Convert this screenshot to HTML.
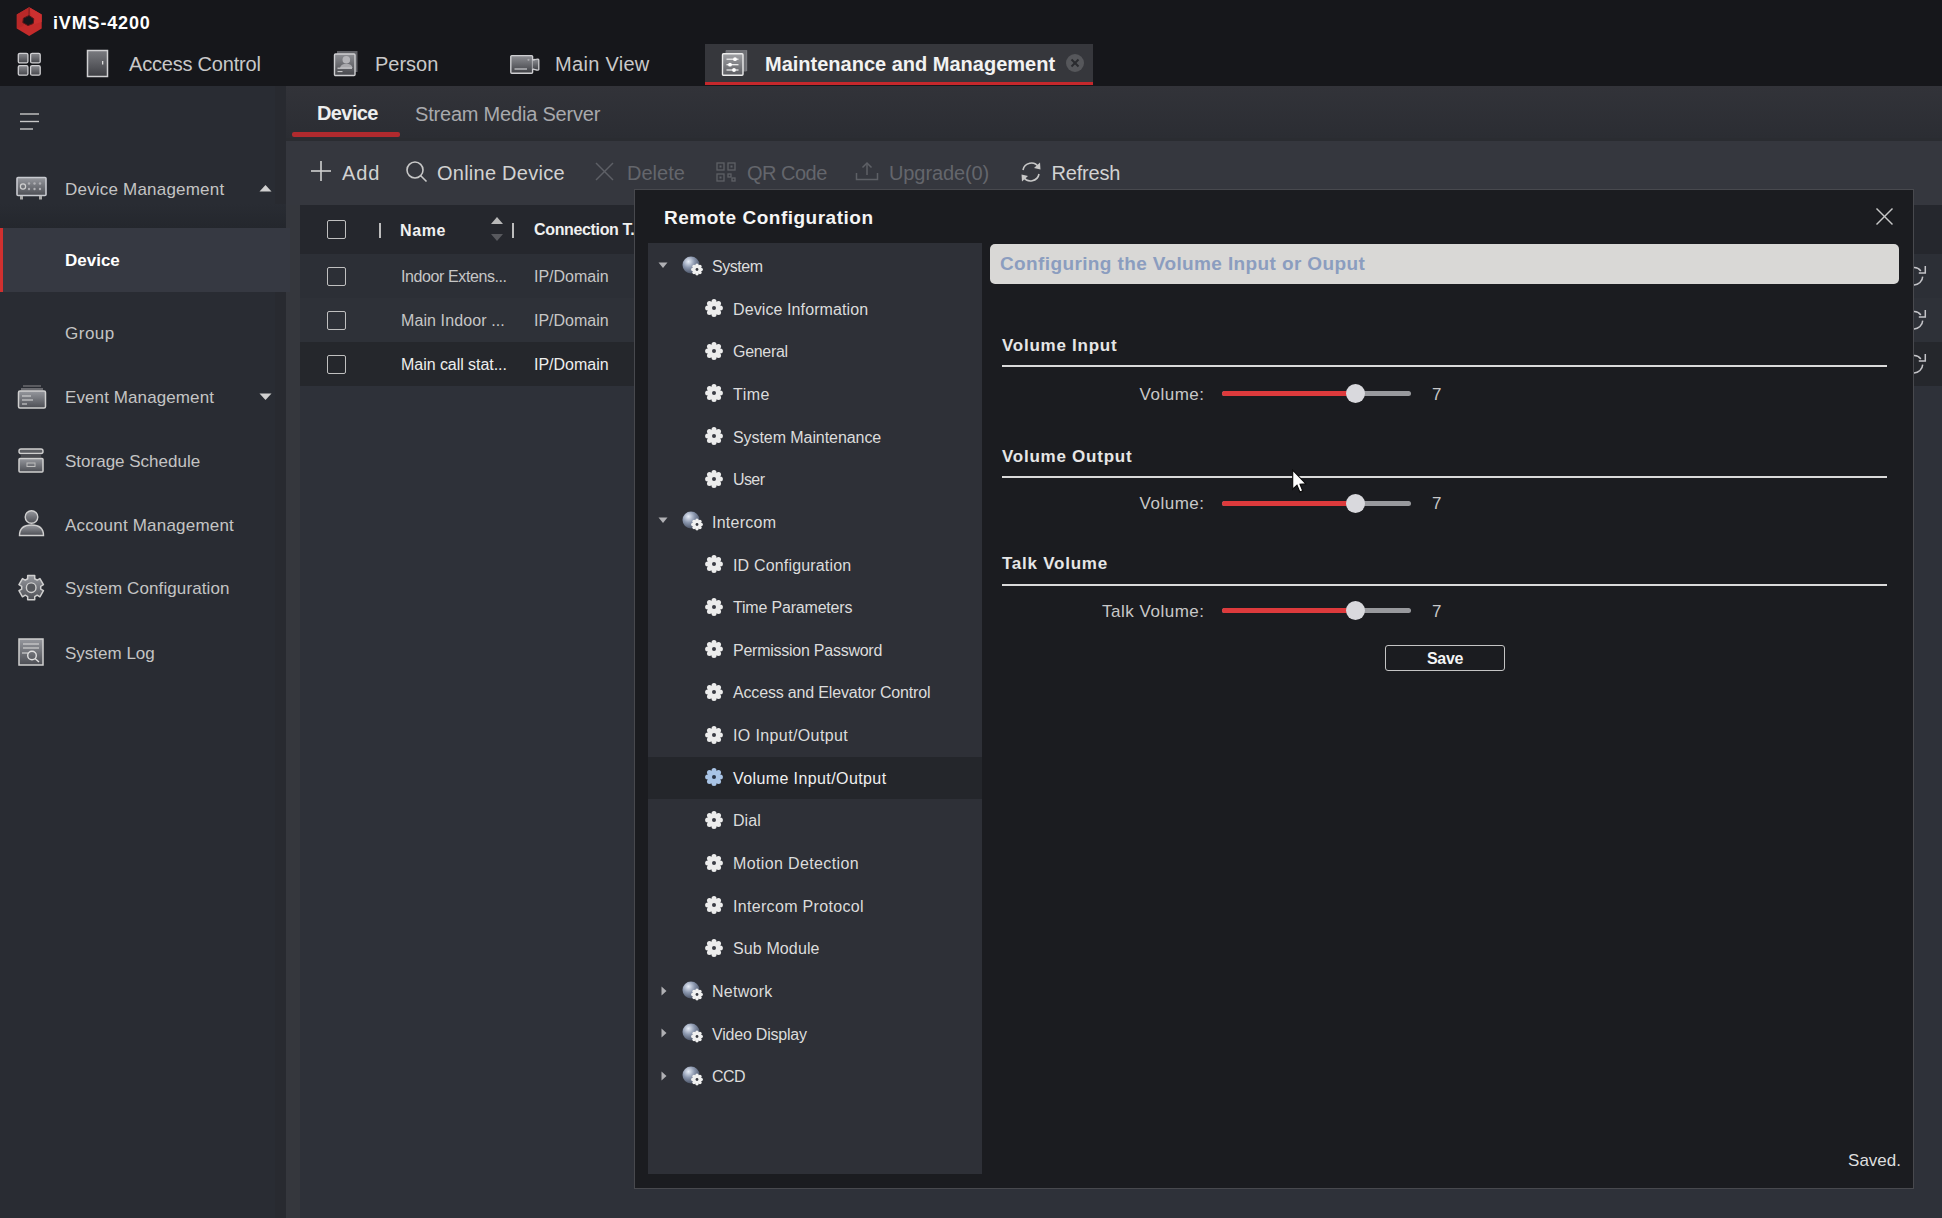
<!DOCTYPE html>
<html><head><meta charset="utf-8"><title>iVMS-4200</title>
<style>
html,body{margin:0;padding:0;}
body{width:1942px;height:1218px;position:relative;overflow:hidden;background:#2e3139;font-family:"Liberation Sans", sans-serif;}
</style></head><body>
<div style="position:absolute;left:0px;top:0px;width:1942px;height:86px;background:#16171b;"></div>
<div style="position:absolute;left:0px;top:86px;width:1942px;height:1132px;background:#2e3139;"></div>
<div style="position:absolute;left:0px;top:86px;width:275px;height:1132px;background:#292c33;"></div>
<div style="position:absolute;left:275px;top:86px;width:11px;height:1132px;background:#282a30;"></div>
<div style="position:absolute;left:286px;top:86px;width:14px;height:1132px;background:#35373d;"></div>
<div style="position:absolute;left:286px;top:86px;width:1656px;height:52px;background:linear-gradient(#323339,#2b2d33);"></div>
<div style="position:absolute;left:286px;top:138px;width:1656px;height:3px;background:#2a2c31;"></div>
<div style="position:absolute;left:286px;top:141px;width:1656px;height:64px;background:#35373e;"></div>
<div style="position:absolute;left:300px;top:205px;width:1642px;height:49px;background:#25272d;"></div>
<div style="position:absolute;left:300px;top:254px;width:1642px;height:44px;background:#2c2f36;"></div>
<div style="position:absolute;left:300px;top:298px;width:1642px;height:44px;background:#2e3138;"></div>
<div style="position:absolute;left:300px;top:342px;width:1642px;height:44px;background:#25272c;"></div>
<svg style="position:absolute;left:0px;top:0px;" width="50" height="45" viewBox="0 0 50 45">
<polygon points="29.2,7.3 41.7,14.5 41.7,28.6 29.2,36 16.8,28.6 16.8,14.5" fill="#c42b2b"/>
<polygon points="29.2,7.3 41.7,14.5 41.7,22 33.5,24.5" fill="#cc3030"/>
<polygon points="16.8,14.5 29.2,7.3 29,16 23,26 16.8,28.6" fill="#b82828"/>
<polygon points="29,15.5 33.8,18.8 33.2,23.5 28,25.6 22.8,22.6 23.4,18.2" fill="#16171b" stroke="#5a1618" stroke-width="1" stroke-linejoin="round"/>
<line x1="29.2" y1="7.5" x2="29" y2="16" stroke="#5a1a1c" stroke-width="0.8"/></svg>
<div style="position:absolute;left:53px;top:13.76px;font-size:18px;line-height:18px;color:#ffffff;font-weight:bold;letter-spacing:0.85px;white-space:nowrap;">iVMS-4200</div>
<svg style="position:absolute;left:17px;top:52px;" width="25" height="25" viewBox="0 0 25 25">
<defs><linearGradient id="gg2" x1="0" y1="0" x2="0" y2="1"><stop offset="0" stop-color="#8a8b90"/><stop offset="1" stop-color="#45464b"/></linearGradient></defs>
<g fill="url(#gg2)" stroke="#cfcfd2" stroke-width="1.3">
<rect x="1.3" y="1.3" width="9.6" height="9.6" rx="1.5"/><rect x="13.6" y="1.3" width="9.6" height="9.6" rx="1.5"/>
<rect x="1.3" y="13.6" width="9.6" height="9.6" rx="1.5"/><rect x="13.6" y="13.6" width="9.6" height="9.6" rx="1.5"/>
</g></svg>
<svg style="position:absolute;left:86px;top:49px;" width="24" height="29" viewBox="0 0 24 29">
<defs><linearGradient id="dg" x1="0" y1="0" x2="0" y2="1"><stop offset="0" stop-color="#7a7b80"/><stop offset="1" stop-color="#3e3f44"/></linearGradient></defs>
<rect x="1.5" y="1.5" width="20" height="26" fill="url(#dg)" stroke="#d0d0d2" stroke-width="1.5"/>
<rect x="16" y="12" width="1.3" height="3.5" fill="#ddd"/></svg>
<div style="position:absolute;left:129px;top:54.07px;font-size:20px;line-height:20px;color:#c9c9c9;letter-spacing:-0.2px;white-space:nowrap;">Access Control</div>
<svg style="position:absolute;left:330px;top:48px;" width="30" height="30" viewBox="0 0 30 30">
<defs><linearGradient id="pg" x1="0" y1="0" x2="0" y2="1"><stop offset="0" stop-color="#8e8f94"/><stop offset="1" stop-color="#46474c"/></linearGradient></defs>
<rect x="7" y="3" width="20.5" height="21" fill="#606166"/>
<rect x="4.5" y="6" width="20.5" height="21.5" rx="1" fill="url(#pg)" stroke="#cfcfd2" stroke-width="1.4"/>
<circle cx="16.3" cy="11.8" r="3.8" fill="#b4b4b8"/>
<path d="M10,20 Q11,15.8 16.3,15.8 Q21.6,15.8 22.6,20 Z" fill="#a8a8ac"/>
<line x1="7.5" y1="20.2" x2="22" y2="20.2" stroke="#d6d6d8" stroke-width="1.1"/>
<line x1="7.5" y1="23.6" x2="12.5" y2="23.6" stroke="#d0d0d2" stroke-width="1"/></svg>
<div style="position:absolute;left:375px;top:54.07px;font-size:20px;line-height:20px;color:#c9c9c9;white-space:nowrap;">Person</div>
<svg style="position:absolute;left:507px;top:52px;" width="36" height="24" viewBox="0 0 36 24">
<defs><linearGradient id="cg" x1="0" y1="0" x2="0" y2="1"><stop offset="0" stop-color="#8e8f94"/><stop offset="1" stop-color="#3e3f44"/></linearGradient></defs>
<rect x="3.8" y="3.6" width="21.8" height="17.6" rx="1" fill="url(#cg)" stroke="#cfcfd2" stroke-width="1.4"/>
<path d="M25.6,8 L28,7.5 Q31.5,6.5 31.8,7.8 L31.8,17.5 Q31.5,18.6 28,17.6 L25.6,17" fill="url(#cg)" stroke="#cfcfd2" stroke-width="1.3"/>
<line x1="7.5" y1="17" x2="20" y2="17" stroke="#d8d8da" stroke-width="1.1"/>
<circle cx="21.5" cy="7.8" r="1.1" fill="#a8a8ac"/></svg>
<div style="position:absolute;left:555px;top:54.07px;font-size:20px;line-height:20px;color:#c9c9c9;letter-spacing:0.3px;white-space:nowrap;">Main View</div>
<div style="position:absolute;left:705px;top:44px;width:388px;height:41px;background:#36373c;"></div>
<div style="position:absolute;left:705px;top:82px;width:388px;height:3px;background:#c5282c;"></div>
<svg style="position:absolute;left:720px;top:49px;" width="29" height="29" viewBox="0 0 29 29">
<defs><linearGradient id="mg" x1="0" y1="0" x2="0" y2="1"><stop offset="0" stop-color="#a0a1a5"/><stop offset="1" stop-color="#5c5d62"/></linearGradient></defs>
<path d="M6,1.8 L26.5,1.8 L26.5,22" fill="none" stroke="#8a8b90" stroke-width="1.3"/>
<rect x="5.5" y="1.5" width="21" height="21" fill="#6f7075"/>
<rect x="2.5" y="4.8" width="20.5" height="21.5" rx="1" fill="url(#mg)" stroke="#ececec" stroke-width="1.4"/>
<g stroke="#f4f4f4" stroke-width="1.2"><line x1="6.5" y1="10.2" x2="18.5" y2="10.2"/><line x1="6.5" y1="15.7" x2="18.5" y2="15.7"/><line x1="6.5" y1="21" x2="18.5" y2="21"/></g>
<g fill="#ffffff"><circle cx="15" cy="10.2" r="1.9"/><circle cx="10" cy="15.7" r="1.9"/><circle cx="14" cy="21" r="1.9"/></g></svg>
<div style="position:absolute;left:765px;top:53.57px;font-size:20px;line-height:20px;color:#f2f2f2;font-weight:bold;white-space:nowrap;">Maintenance and Management</div>
<svg style="position:absolute;left:1065px;top:53px;" width="20" height="20" viewBox="0 0 20 20"><circle cx="10" cy="10" r="9" fill="#56575b"/>
<g stroke="#2a2b2f" stroke-width="2"><line x1="6.5" y1="6.5" x2="13.5" y2="13.5"/><line x1="13.5" y1="6.5" x2="6.5" y2="13.5"/></g></svg>
<svg style="position:absolute;left:19px;top:112px;" width="22" height="19" viewBox="0 0 22 19"><g stroke="#c8c8c8" stroke-width="1.4"><line x1="1" y1="2" x2="20" y2="2"/><line x1="1" y1="9.5" x2="20" y2="9.5"/><line x1="1" y1="17" x2="14" y2="17"/></g></svg>
<svg style="position:absolute;left:15px;top:175px;" width="33" height="26" viewBox="0 0 33 26">
<defs><linearGradient id="sbg" x1="0" y1="0" x2="0" y2="1"><stop offset="0" stop-color="#96989e"/><stop offset="1" stop-color="#4c4e54"/></linearGradient></defs>
<rect x="2" y="2.5" width="29" height="18" rx="1" fill="url(#sbg)" stroke="#c8cad0" stroke-width="1.6"/>
<circle cx="8" cy="11.5" r="2.6" fill="none" stroke="#d0d0d0" stroke-width="1.2"/>
<g fill="#b0b0b4"><circle cx="14" cy="8.5" r="1.2"/><circle cx="19.5" cy="8.5" r="1.2"/><circle cx="25" cy="8.5" r="1.2"/><circle cx="14" cy="14" r="1.2"/><circle cx="19.5" cy="14" r="1.2"/><circle cx="25" cy="14" r="1.2"/></g>
<rect x="5" y="21" width="3" height="3.5" fill="#aaa"/><rect x="24" y="21" width="3" height="3.5" fill="#aaa"/></svg>
<div style="position:absolute;left:65px;top:180.61px;font-size:17px;line-height:17px;color:#c4c4c4;letter-spacing:0.2px;white-space:nowrap;">Device Management</div>
<svg style="position:absolute;left:259px;top:184px;" width="13" height="8" viewBox="0 0 13 8"><polygon points="0.5,7.5 6.5,1 12.5,7.5" fill="#d0d0d0"/></svg>
<div style="position:absolute;left:0px;top:204px;width:286px;height:24px;background:linear-gradient(#292c33,#24272d);"></div>
<div style="position:absolute;left:0px;top:228px;width:290px;height:64px;background:#363942;"></div>
<div style="position:absolute;left:0px;top:228px;width:3px;height:64px;background:#d0302f;"></div>
<div style="position:absolute;left:65px;top:252.11px;font-size:17px;line-height:17px;color:#ffffff;font-weight:bold;white-space:nowrap;">Device</div>
<div style="position:absolute;left:65px;top:325.11px;font-size:17px;line-height:17px;color:#c4c4c4;letter-spacing:0.5px;white-space:nowrap;">Group</div>
<svg style="position:absolute;left:17px;top:383px;" width="30" height="27" viewBox="0 0 30 27">
<rect x="6" y="2" width="18" height="2" fill="#5a5b60"/>
<rect x="4" y="5" width="22" height="2.5" fill="#6a6b70"/>
<rect x="1.5" y="8" width="27" height="17" rx="1.5" fill="url(#sbg)" stroke="#cfcfcf" stroke-width="1.5"/>
<g stroke="#dcdcdc" stroke-width="1"><line x1="5" y1="13" x2="14" y2="13"/><line x1="5" y1="17" x2="16" y2="17"/><line x1="5" y1="21" x2="10" y2="21"/></g></svg>
<div style="position:absolute;left:65px;top:388.61px;font-size:17px;line-height:17px;color:#c4c4c4;letter-spacing:0.1px;white-space:nowrap;">Event Management</div>
<svg style="position:absolute;left:259px;top:393px;" width="13" height="8" viewBox="0 0 13 8"><polygon points="0.5,0.5 12.5,0.5 6.5,7" fill="#d0d0d0"/></svg>
<svg style="position:absolute;left:17px;top:447px;" width="28" height="27" viewBox="0 0 28 27">
<rect x="2" y="2" width="24" height="4.5" rx="2" fill="#5c5e63" stroke="#cfcfcf" stroke-width="1.4"/>
<rect x="4" y="7.5" width="20" height="3" fill="#4a4b50"/>
<rect x="2" y="11.5" width="24" height="13.5" rx="1" fill="url(#sbg)" stroke="#cfcfcf" stroke-width="1.5"/>
<rect x="10" y="16" width="8" height="3.5" fill="none" stroke="#bdbdbd" stroke-width="1"/></svg>
<div style="position:absolute;left:65px;top:453.11px;font-size:17px;line-height:17px;color:#c4c4c4;white-space:nowrap;">Storage Schedule</div>
<svg style="position:absolute;left:17px;top:508px;" width="29" height="30" viewBox="0 0 29 30">
<circle cx="14.5" cy="9" r="6.3" fill="url(#sbg)" stroke="#cfcfcf" stroke-width="1.4"/>
<path d="M2.5,27.5 Q2.5,17 14.5,17 Q26.5,17 26.5,27.5 Z" fill="url(#sbg)" stroke="#cfcfcf" stroke-width="1.4"/></svg>
<div style="position:absolute;left:65px;top:516.61px;font-size:17px;line-height:17px;color:#c4c4c4;letter-spacing:0.2px;white-space:nowrap;">Account Management</div>
<svg style="position:absolute;left:16px;top:572px;" width="31" height="31" viewBox="0 0 31 31">
<path d="M11.67,6.77 L11.68,3.60 L18.72,3.60 L18.73,6.77 L21.16,8.18 L23.92,6.61 L27.44,12.69 L24.70,14.30 L24.70,17.10 L27.44,18.71 L23.92,24.79 L21.16,23.22 L18.73,24.63 L18.72,27.80 L11.68,27.80 L11.67,24.63 L9.24,23.22 L6.48,24.79 L2.96,18.71 L5.70,17.10 L5.70,14.30 L2.96,12.69 L6.48,6.61 L9.24,8.18 Z" fill="url(#sbg)" stroke="#cfcfcf" stroke-width="1.5" stroke-linejoin="round"/>
<circle cx="15.2" cy="15.7" r="4.8" fill="#55575c" stroke="#cfcfcf" stroke-width="1.4"/></svg>
<div style="position:absolute;left:65px;top:580.11px;font-size:17px;line-height:17px;color:#c4c4c4;letter-spacing:0.1px;white-space:nowrap;">System Configuration</div>
<svg style="position:absolute;left:17px;top:637px;" width="28" height="30" viewBox="0 0 28 30">
<rect x="2" y="2" width="24" height="26" fill="url(#sbg)" stroke="#cfcfcf" stroke-width="1.5"/>
<g stroke="#d8d8d8" stroke-width="1.1"><line x1="6" y1="7" x2="22" y2="7"/><line x1="6" y1="11" x2="22" y2="11"/><line x1="5" y1="16" x2="11" y2="16"/></g>
<circle cx="15" cy="18.5" r="4.3" fill="none" stroke="#e0e0e0" stroke-width="1.4"/>
<line x1="18" y1="21.5" x2="22" y2="25" stroke="#e0e0e0" stroke-width="1.4"/></svg>
<div style="position:absolute;left:65px;top:644.61px;font-size:17px;line-height:17px;color:#c4c4c4;white-space:nowrap;">System Log</div>
<div style="position:absolute;left:317px;top:103.07px;font-size:20px;line-height:20px;color:#eeeeee;font-weight:bold;letter-spacing:-0.6px;white-space:nowrap;">Device</div>
<div style="position:absolute;left:292px;top:132px;width:108px;height:4.5px;background:#b02a2e;border-radius:2px;"></div>
<div style="position:absolute;left:415px;top:104.07px;font-size:20px;line-height:20px;color:#a8a9ad;letter-spacing:-0.2px;white-space:nowrap;">Stream Media Server</div>
<svg style="position:absolute;left:310px;top:160px;" width="22" height="22" viewBox="0 0 22 22"><g stroke="#d0d0d0" stroke-width="1.6"><line x1="11" y1="1" x2="11" y2="21"/><line x1="1" y1="11" x2="21" y2="11"/></g></svg>
<div style="position:absolute;left:342px;top:163.07px;font-size:20px;line-height:20px;color:#d2d2d2;letter-spacing:0.9px;white-space:nowrap;">Add</div>
<svg style="position:absolute;left:405px;top:160px;" width="24" height="24" viewBox="0 0 24 24"><circle cx="10" cy="10" r="8" fill="none" stroke="#c8c8c8" stroke-width="1.6"/><line x1="15.5" y1="15.5" x2="21.5" y2="21.5" stroke="#c8c8c8" stroke-width="1.6"/></svg>
<div style="position:absolute;left:437px;top:163.07px;font-size:20px;line-height:20px;color:#d2d2d2;letter-spacing:0.25px;white-space:nowrap;">Online Device</div>
<svg style="position:absolute;left:595px;top:162px;" width="19" height="19" viewBox="0 0 19 19"><g stroke="#5e6066" stroke-width="1.5"><line x1="1" y1="1" x2="18" y2="18"/><line x1="18" y1="1" x2="1" y2="18"/></g></svg>
<div style="position:absolute;left:627px;top:163.07px;font-size:20px;line-height:20px;color:#64666c;white-space:nowrap;">Delete</div>
<svg style="position:absolute;left:716px;top:162px;" width="20" height="20" viewBox="0 0 20 20"><g fill="none" stroke="#5e6066" stroke-width="1.3">
<rect x="1" y="1" width="7" height="7"/><rect x="12" y="1" width="7" height="7"/><rect x="1" y="12" width="7" height="7"/>
<rect x="12" y="12" width="3" height="3"/><rect x="16" y="16" width="3" height="3"/></g>
<g fill="#5e6066"><rect x="3.5" y="3.5" width="2" height="2"/><rect x="14.5" y="3.5" width="2" height="2"/><rect x="3.5" y="14.5" width="2" height="2"/></g></svg>
<div style="position:absolute;left:747px;top:163.07px;font-size:20px;line-height:20px;color:#64666c;letter-spacing:-0.5px;white-space:nowrap;">QR Code</div>
<svg style="position:absolute;left:855px;top:161px;" width="24" height="20" viewBox="0 0 24 20"><g fill="none" stroke="#5e6066" stroke-width="1.5"><path d="M1.5,12 L1.5,18.5 L22.5,18.5 L22.5,12"/><line x1="12" y1="2" x2="12" y2="14"/><path d="M7.5,6.5 L12,2 L16.5,6.5"/></g></svg>
<div style="position:absolute;left:889px;top:163.07px;font-size:20px;line-height:20px;color:#64666c;letter-spacing:-0.1px;white-space:nowrap;">Upgrade(0)</div>
<svg style="position:absolute;left:1019px;top:160px;" width="24" height="24" viewBox="0 0 24 24"><g fill="none" stroke="#c8c8c8" stroke-width="1.6">
<path d="M4,10 A8.5,8.5 0 0 1 19.5,7"/><path d="M20,14 A8.5,8.5 0 0 1 4.5,17"/></g>
<g fill="#c8c8c8"><polygon points="21,2.5 21.5,9.5 15,8"/><polygon points="3,21.5 2.5,14.5 9,16"/></g></svg>
<div style="position:absolute;left:1051.5px;top:163.07px;font-size:20px;line-height:20px;color:#d2d2d2;letter-spacing:-0.2px;white-space:nowrap;">Refresh</div>
<div style="position:absolute;left:327px;top:220px;width:19px;height:19px;background:transparent;box-sizing:border-box;border:1.5px solid #c0c0c0;border-radius:2px;"></div>
<div style="position:absolute;left:379px;top:223px;width:2px;height:15px;background:#bdbdbd;"></div>
<div style="position:absolute;left:400px;top:222.96px;font-size:16px;line-height:16px;color:#f0f0f0;font-weight:bold;letter-spacing:0.6px;white-space:nowrap;">Name</div>
<svg style="position:absolute;left:490px;top:215px;" width="14" height="28" viewBox="0 0 14 28"><polygon points="1,9 7,2 13,9" fill="#b8b8b8"/><polygon points="1,19 13,19 7,26" fill="#58595e"/></svg>
<div style="position:absolute;left:512px;top:223px;width:2px;height:15px;background:#bdbdbd;"></div>
<div style="position:absolute;left:534px;top:222.46px;font-size:16px;line-height:16px;color:#f0f0f0;font-weight:bold;letter-spacing:-0.35px;white-space:nowrap;">Connection T.</div>
<div style="position:absolute;left:327px;top:267px;width:19px;height:19px;background:transparent;box-sizing:border-box;border:1.5px solid #c0c0c0;border-radius:2px;"></div>
<div style="position:absolute;left:401px;top:268.96px;font-size:16px;line-height:16px;color:#c6c6c6;letter-spacing:-0.4px;white-space:nowrap;">Indoor Extens...</div>
<div style="position:absolute;left:534px;top:268.96px;font-size:16px;line-height:16px;color:#c6c6c6;white-space:nowrap;">IP/Domain</div>
<div style="position:absolute;left:327px;top:311px;width:19px;height:19px;background:transparent;box-sizing:border-box;border:1.5px solid #c0c0c0;border-radius:2px;"></div>
<div style="position:absolute;left:401px;top:312.96px;font-size:16px;line-height:16px;color:#c6c6c6;letter-spacing:0.1px;white-space:nowrap;">Main Indoor ...</div>
<div style="position:absolute;left:534px;top:312.96px;font-size:16px;line-height:16px;color:#c6c6c6;white-space:nowrap;">IP/Domain</div>
<div style="position:absolute;left:327px;top:355px;width:19px;height:19px;background:transparent;box-sizing:border-box;border:1.5px solid #c0c0c0;border-radius:2px;"></div>
<div style="position:absolute;left:401px;top:356.96px;font-size:16px;line-height:16px;color:#eeeeee;letter-spacing:-0.05px;white-space:nowrap;">Main call stat...</div>
<div style="position:absolute;left:534px;top:356.96px;font-size:16px;line-height:16px;color:#eeeeee;white-space:nowrap;">IP/Domain</div>
<svg style="position:absolute;left:1900px;top:262px;" width="30" height="28" viewBox="0 0 30 28"><g fill="none" stroke="#c4c4c8" stroke-width="1.5"><path d="M5.30,14.3 A8.7,8.7 0 0 1 20.86,8.94"/><path d="M22.69,14.60 A8.7,8.7 0 0 1 5.30,14.3"/><path d="M25.3,4 L25.3,10.9 L18.8,10.9"/></g></svg>
<svg style="position:absolute;left:1900px;top:306px;" width="30" height="28" viewBox="0 0 30 28"><g fill="none" stroke="#c4c4c8" stroke-width="1.5"><path d="M5.30,14.3 A8.7,8.7 0 0 1 20.86,8.94"/><path d="M22.69,14.60 A8.7,8.7 0 0 1 5.30,14.3"/><path d="M25.3,4 L25.3,10.9 L18.8,10.9"/></g></svg>
<svg style="position:absolute;left:1900px;top:350px;" width="30" height="28" viewBox="0 0 30 28"><g fill="none" stroke="#c4c4c8" stroke-width="1.5"><path d="M5.30,14.3 A8.7,8.7 0 0 1 20.86,8.94"/><path d="M22.69,14.60 A8.7,8.7 0 0 1 5.30,14.3"/><path d="M25.3,4 L25.3,10.9 L18.8,10.9"/></g></svg>
<div style="position:absolute;left:634px;top:189px;width:1280px;height:1000px;background:#1b1c20;box-sizing:border-box;border:1px solid #48494e;"></div>
<div style="position:absolute;left:664px;top:207.92px;font-size:19px;line-height:19px;color:#f5f5f5;font-weight:bold;letter-spacing:0.5px;white-space:nowrap;">Remote Configuration</div>
<svg style="position:absolute;left:1875px;top:207px;" width="19" height="19" viewBox="0 0 19 19"><g stroke="#c8c8c8" stroke-width="1.5"><line x1="1.5" y1="1.5" x2="17.5" y2="17.5"/><line x1="17.5" y1="1.5" x2="1.5" y2="17.5"/></g></svg>
<div style="position:absolute;left:648px;top:243px;width:334px;height:931px;background:#2e3037;"></div>
<div style="position:absolute;left:648px;top:757px;width:334px;height:42px;background:#24262b;"></div>
<svg style="position:absolute;left:658px;top:262px;" width="10" height="7" viewBox="0 0 10 7"><polygon points="0.5,0.5 9.5,0.5 5,6" fill="#b0b0b4"/></svg>
<svg style="position:absolute;left:681px;top:255px;" width="24" height="22" viewBox="0 0 24 22">
<defs><radialGradient id="gg681255" cx="0.35" cy="0.3" r="0.8"><stop offset="0" stop-color="#e8eef8"/><stop offset="0.45" stop-color="#8a96ad"/><stop offset="1" stop-color="#3c4456"/></radialGradient></defs>
<circle cx="10" cy="10" r="8.5" fill="url(#gg681255)"/>
<g fill="#f0f0f0"><circle cx="16" cy="14.5" r="4.3"/><circle cx="16.00" cy="10.30" r="1.7"/><circle cx="18.97" cy="11.53" r="1.7"/><circle cx="20.20" cy="14.50" r="1.7"/><circle cx="18.97" cy="17.47" r="1.7"/><circle cx="16.00" cy="18.70" r="1.7"/><circle cx="13.03" cy="17.47" r="1.7"/><circle cx="11.80" cy="14.50" r="1.7"/><circle cx="13.03" cy="11.53" r="1.7"/></g>
<circle cx="16" cy="14.5" r="1.4" fill="#3a3c44"/></svg>
<div style="position:absolute;left:712px;top:258.96px;font-size:16px;line-height:16px;color:#dcdcdc;letter-spacing:-0.45px;white-space:nowrap;">System</div>
<svg style="position:absolute;left:704px;top:298px;" width="20" height="20" viewBox="0 0 20 20"><g fill="#ececec"><circle cx="10" cy="10" r="6.6"/><circle cx="10.00" cy="3.60" r="2.5"/><circle cx="14.53" cy="5.47" r="2.5"/><circle cx="16.40" cy="10.00" r="2.5"/><circle cx="14.53" cy="14.53" r="2.5"/><circle cx="10.00" cy="16.40" r="2.5"/><circle cx="5.47" cy="14.53" r="2.5"/><circle cx="3.60" cy="10.00" r="2.5"/><circle cx="5.47" cy="5.47" r="2.5"/></g><circle cx="10" cy="10" r="2" fill="#3a3c44"/></svg>
<div style="position:absolute;left:733px;top:301.61px;font-size:16px;line-height:16px;color:#dcdcdc;letter-spacing:0.1px;white-space:nowrap;">Device Information</div>
<svg style="position:absolute;left:704px;top:341px;" width="20" height="20" viewBox="0 0 20 20"><g fill="#ececec"><circle cx="10" cy="10" r="6.6"/><circle cx="10.00" cy="3.60" r="2.5"/><circle cx="14.53" cy="5.47" r="2.5"/><circle cx="16.40" cy="10.00" r="2.5"/><circle cx="14.53" cy="14.53" r="2.5"/><circle cx="10.00" cy="16.40" r="2.5"/><circle cx="5.47" cy="14.53" r="2.5"/><circle cx="3.60" cy="10.00" r="2.5"/><circle cx="5.47" cy="5.47" r="2.5"/></g><circle cx="10" cy="10" r="2" fill="#3a3c44"/></svg>
<div style="position:absolute;left:733px;top:344.26px;font-size:16px;line-height:16px;color:#dcdcdc;letter-spacing:-0.3px;white-space:nowrap;">General</div>
<svg style="position:absolute;left:704px;top:383px;" width="20" height="20" viewBox="0 0 20 20"><g fill="#ececec"><circle cx="10" cy="10" r="6.6"/><circle cx="10.00" cy="3.60" r="2.5"/><circle cx="14.53" cy="5.47" r="2.5"/><circle cx="16.40" cy="10.00" r="2.5"/><circle cx="14.53" cy="14.53" r="2.5"/><circle cx="10.00" cy="16.40" r="2.5"/><circle cx="5.47" cy="14.53" r="2.5"/><circle cx="3.60" cy="10.00" r="2.5"/><circle cx="5.47" cy="5.47" r="2.5"/></g><circle cx="10" cy="10" r="2" fill="#3a3c44"/></svg>
<div style="position:absolute;left:733px;top:386.91px;font-size:16px;line-height:16px;color:#dcdcdc;letter-spacing:0.5px;white-space:nowrap;">Time</div>
<svg style="position:absolute;left:704px;top:426px;" width="20" height="20" viewBox="0 0 20 20"><g fill="#ececec"><circle cx="10" cy="10" r="6.6"/><circle cx="10.00" cy="3.60" r="2.5"/><circle cx="14.53" cy="5.47" r="2.5"/><circle cx="16.40" cy="10.00" r="2.5"/><circle cx="14.53" cy="14.53" r="2.5"/><circle cx="10.00" cy="16.40" r="2.5"/><circle cx="5.47" cy="14.53" r="2.5"/><circle cx="3.60" cy="10.00" r="2.5"/><circle cx="5.47" cy="5.47" r="2.5"/></g><circle cx="10" cy="10" r="2" fill="#3a3c44"/></svg>
<div style="position:absolute;left:733px;top:429.56px;font-size:16px;line-height:16px;color:#dcdcdc;letter-spacing:-0.07px;white-space:nowrap;">System Maintenance</div>
<svg style="position:absolute;left:704px;top:469px;" width="20" height="20" viewBox="0 0 20 20"><g fill="#ececec"><circle cx="10" cy="10" r="6.6"/><circle cx="10.00" cy="3.60" r="2.5"/><circle cx="14.53" cy="5.47" r="2.5"/><circle cx="16.40" cy="10.00" r="2.5"/><circle cx="14.53" cy="14.53" r="2.5"/><circle cx="10.00" cy="16.40" r="2.5"/><circle cx="5.47" cy="14.53" r="2.5"/><circle cx="3.60" cy="10.00" r="2.5"/><circle cx="5.47" cy="5.47" r="2.5"/></g><circle cx="10" cy="10" r="2" fill="#3a3c44"/></svg>
<div style="position:absolute;left:733px;top:472.21px;font-size:16px;line-height:16px;color:#dcdcdc;letter-spacing:-0.6px;white-space:nowrap;">User</div>
<svg style="position:absolute;left:658px;top:517px;" width="10" height="7" viewBox="0 0 10 7"><polygon points="0.5,0.5 9.5,0.5 5,6" fill="#b0b0b4"/></svg>
<svg style="position:absolute;left:681px;top:510px;" width="24" height="22" viewBox="0 0 24 22">
<defs><radialGradient id="gg681510" cx="0.35" cy="0.3" r="0.8"><stop offset="0" stop-color="#e8eef8"/><stop offset="0.45" stop-color="#8a96ad"/><stop offset="1" stop-color="#3c4456"/></radialGradient></defs>
<circle cx="10" cy="10" r="8.5" fill="url(#gg681510)"/>
<g fill="#f0f0f0"><circle cx="16" cy="14.5" r="4.3"/><circle cx="16.00" cy="10.30" r="1.7"/><circle cx="18.97" cy="11.53" r="1.7"/><circle cx="20.20" cy="14.50" r="1.7"/><circle cx="18.97" cy="17.47" r="1.7"/><circle cx="16.00" cy="18.70" r="1.7"/><circle cx="13.03" cy="17.47" r="1.7"/><circle cx="11.80" cy="14.50" r="1.7"/><circle cx="13.03" cy="11.53" r="1.7"/></g>
<circle cx="16" cy="14.5" r="1.4" fill="#3a3c44"/></svg>
<div style="position:absolute;left:712px;top:514.86px;font-size:16px;line-height:16px;color:#dcdcdc;letter-spacing:0.25px;white-space:nowrap;">Intercom</div>
<svg style="position:absolute;left:704px;top:554px;" width="20" height="20" viewBox="0 0 20 20"><g fill="#ececec"><circle cx="10" cy="10" r="6.6"/><circle cx="10.00" cy="3.60" r="2.5"/><circle cx="14.53" cy="5.47" r="2.5"/><circle cx="16.40" cy="10.00" r="2.5"/><circle cx="14.53" cy="14.53" r="2.5"/><circle cx="10.00" cy="16.40" r="2.5"/><circle cx="5.47" cy="14.53" r="2.5"/><circle cx="3.60" cy="10.00" r="2.5"/><circle cx="5.47" cy="5.47" r="2.5"/></g><circle cx="10" cy="10" r="2" fill="#3a3c44"/></svg>
<div style="position:absolute;left:733px;top:557.51px;font-size:16px;line-height:16px;color:#dcdcdc;letter-spacing:0.17px;white-space:nowrap;">ID Configuration</div>
<svg style="position:absolute;left:704px;top:597px;" width="20" height="20" viewBox="0 0 20 20"><g fill="#ececec"><circle cx="10" cy="10" r="6.6"/><circle cx="10.00" cy="3.60" r="2.5"/><circle cx="14.53" cy="5.47" r="2.5"/><circle cx="16.40" cy="10.00" r="2.5"/><circle cx="14.53" cy="14.53" r="2.5"/><circle cx="10.00" cy="16.40" r="2.5"/><circle cx="5.47" cy="14.53" r="2.5"/><circle cx="3.60" cy="10.00" r="2.5"/><circle cx="5.47" cy="5.47" r="2.5"/></g><circle cx="10" cy="10" r="2" fill="#3a3c44"/></svg>
<div style="position:absolute;left:733px;top:600.16px;font-size:16px;line-height:16px;color:#dcdcdc;letter-spacing:-0.19px;white-space:nowrap;">Time Parameters</div>
<svg style="position:absolute;left:704px;top:639px;" width="20" height="20" viewBox="0 0 20 20"><g fill="#ececec"><circle cx="10" cy="10" r="6.6"/><circle cx="10.00" cy="3.60" r="2.5"/><circle cx="14.53" cy="5.47" r="2.5"/><circle cx="16.40" cy="10.00" r="2.5"/><circle cx="14.53" cy="14.53" r="2.5"/><circle cx="10.00" cy="16.40" r="2.5"/><circle cx="5.47" cy="14.53" r="2.5"/><circle cx="3.60" cy="10.00" r="2.5"/><circle cx="5.47" cy="5.47" r="2.5"/></g><circle cx="10" cy="10" r="2" fill="#3a3c44"/></svg>
<div style="position:absolute;left:733px;top:642.81px;font-size:16px;line-height:16px;color:#dcdcdc;letter-spacing:-0.25px;white-space:nowrap;">Permission Password</div>
<svg style="position:absolute;left:704px;top:682px;" width="20" height="20" viewBox="0 0 20 20"><g fill="#ececec"><circle cx="10" cy="10" r="6.6"/><circle cx="10.00" cy="3.60" r="2.5"/><circle cx="14.53" cy="5.47" r="2.5"/><circle cx="16.40" cy="10.00" r="2.5"/><circle cx="14.53" cy="14.53" r="2.5"/><circle cx="10.00" cy="16.40" r="2.5"/><circle cx="5.47" cy="14.53" r="2.5"/><circle cx="3.60" cy="10.00" r="2.5"/><circle cx="5.47" cy="5.47" r="2.5"/></g><circle cx="10" cy="10" r="2" fill="#3a3c44"/></svg>
<div style="position:absolute;left:733px;top:685.46px;font-size:16px;line-height:16px;color:#dcdcdc;letter-spacing:-0.17px;white-space:nowrap;">Access and Elevator Control</div>
<svg style="position:absolute;left:704px;top:725px;" width="20" height="20" viewBox="0 0 20 20"><g fill="#ececec"><circle cx="10" cy="10" r="6.6"/><circle cx="10.00" cy="3.60" r="2.5"/><circle cx="14.53" cy="5.47" r="2.5"/><circle cx="16.40" cy="10.00" r="2.5"/><circle cx="14.53" cy="14.53" r="2.5"/><circle cx="10.00" cy="16.40" r="2.5"/><circle cx="5.47" cy="14.53" r="2.5"/><circle cx="3.60" cy="10.00" r="2.5"/><circle cx="5.47" cy="5.47" r="2.5"/></g><circle cx="10" cy="10" r="2" fill="#3a3c44"/></svg>
<div style="position:absolute;left:733px;top:728.11px;font-size:16px;line-height:16px;color:#dcdcdc;letter-spacing:0.38px;white-space:nowrap;">IO Input/Output</div>
<svg style="position:absolute;left:704px;top:767px;" width="20" height="20" viewBox="0 0 20 20"><g fill="#a9c4e6"><circle cx="10" cy="10" r="6.6"/><circle cx="10.00" cy="3.60" r="2.5"/><circle cx="14.53" cy="5.47" r="2.5"/><circle cx="16.40" cy="10.00" r="2.5"/><circle cx="14.53" cy="14.53" r="2.5"/><circle cx="10.00" cy="16.40" r="2.5"/><circle cx="5.47" cy="14.53" r="2.5"/><circle cx="3.60" cy="10.00" r="2.5"/><circle cx="5.47" cy="5.47" r="2.5"/></g><circle cx="10" cy="10" r="2" fill="#2a3446"/></svg>
<div style="position:absolute;left:733px;top:770.76px;font-size:16px;line-height:16px;color:#f0f0f0;letter-spacing:0.4px;white-space:nowrap;">Volume Input/Output</div>
<svg style="position:absolute;left:704px;top:810px;" width="20" height="20" viewBox="0 0 20 20"><g fill="#ececec"><circle cx="10" cy="10" r="6.6"/><circle cx="10.00" cy="3.60" r="2.5"/><circle cx="14.53" cy="5.47" r="2.5"/><circle cx="16.40" cy="10.00" r="2.5"/><circle cx="14.53" cy="14.53" r="2.5"/><circle cx="10.00" cy="16.40" r="2.5"/><circle cx="5.47" cy="14.53" r="2.5"/><circle cx="3.60" cy="10.00" r="2.5"/><circle cx="5.47" cy="5.47" r="2.5"/></g><circle cx="10" cy="10" r="2" fill="#3a3c44"/></svg>
<div style="position:absolute;left:733px;top:813.41px;font-size:16px;line-height:16px;color:#dcdcdc;letter-spacing:0.05px;white-space:nowrap;">Dial</div>
<svg style="position:absolute;left:704px;top:853px;" width="20" height="20" viewBox="0 0 20 20"><g fill="#ececec"><circle cx="10" cy="10" r="6.6"/><circle cx="10.00" cy="3.60" r="2.5"/><circle cx="14.53" cy="5.47" r="2.5"/><circle cx="16.40" cy="10.00" r="2.5"/><circle cx="14.53" cy="14.53" r="2.5"/><circle cx="10.00" cy="16.40" r="2.5"/><circle cx="5.47" cy="14.53" r="2.5"/><circle cx="3.60" cy="10.00" r="2.5"/><circle cx="5.47" cy="5.47" r="2.5"/></g><circle cx="10" cy="10" r="2" fill="#3a3c44"/></svg>
<div style="position:absolute;left:733px;top:856.06px;font-size:16px;line-height:16px;color:#dcdcdc;letter-spacing:0.37px;white-space:nowrap;">Motion Detection</div>
<svg style="position:absolute;left:704px;top:895px;" width="20" height="20" viewBox="0 0 20 20"><g fill="#ececec"><circle cx="10" cy="10" r="6.6"/><circle cx="10.00" cy="3.60" r="2.5"/><circle cx="14.53" cy="5.47" r="2.5"/><circle cx="16.40" cy="10.00" r="2.5"/><circle cx="14.53" cy="14.53" r="2.5"/><circle cx="10.00" cy="16.40" r="2.5"/><circle cx="5.47" cy="14.53" r="2.5"/><circle cx="3.60" cy="10.00" r="2.5"/><circle cx="5.47" cy="5.47" r="2.5"/></g><circle cx="10" cy="10" r="2" fill="#3a3c44"/></svg>
<div style="position:absolute;left:733px;top:898.71px;font-size:16px;line-height:16px;color:#dcdcdc;letter-spacing:0.32px;white-space:nowrap;">Intercom Protocol</div>
<svg style="position:absolute;left:704px;top:938px;" width="20" height="20" viewBox="0 0 20 20"><g fill="#ececec"><circle cx="10" cy="10" r="6.6"/><circle cx="10.00" cy="3.60" r="2.5"/><circle cx="14.53" cy="5.47" r="2.5"/><circle cx="16.40" cy="10.00" r="2.5"/><circle cx="14.53" cy="14.53" r="2.5"/><circle cx="10.00" cy="16.40" r="2.5"/><circle cx="5.47" cy="14.53" r="2.5"/><circle cx="3.60" cy="10.00" r="2.5"/><circle cx="5.47" cy="5.47" r="2.5"/></g><circle cx="10" cy="10" r="2" fill="#3a3c44"/></svg>
<div style="position:absolute;left:733px;top:941.36px;font-size:16px;line-height:16px;color:#dcdcdc;letter-spacing:0.12px;white-space:nowrap;">Sub Module</div>
<svg style="position:absolute;left:661px;top:986px;" width="6" height="10" viewBox="0 0 6 10"><polygon points="0.5,0.5 5.5,5 0.5,9.5" fill="#b0b0b4"/></svg>
<svg style="position:absolute;left:681px;top:980px;" width="24" height="22" viewBox="0 0 24 22">
<defs><radialGradient id="gg681980" cx="0.35" cy="0.3" r="0.8"><stop offset="0" stop-color="#e8eef8"/><stop offset="0.45" stop-color="#8a96ad"/><stop offset="1" stop-color="#3c4456"/></radialGradient></defs>
<circle cx="10" cy="10" r="8.5" fill="url(#gg681980)"/>
<g fill="#f0f0f0"><circle cx="16" cy="14.5" r="4.3"/><circle cx="16.00" cy="10.30" r="1.7"/><circle cx="18.97" cy="11.53" r="1.7"/><circle cx="20.20" cy="14.50" r="1.7"/><circle cx="18.97" cy="17.47" r="1.7"/><circle cx="16.00" cy="18.70" r="1.7"/><circle cx="13.03" cy="17.47" r="1.7"/><circle cx="11.80" cy="14.50" r="1.7"/><circle cx="13.03" cy="11.53" r="1.7"/></g>
<circle cx="16" cy="14.5" r="1.4" fill="#3a3c44"/></svg>
<div style="position:absolute;left:712px;top:984.01px;font-size:16px;line-height:16px;color:#dcdcdc;letter-spacing:0.26px;white-space:nowrap;">Network</div>
<svg style="position:absolute;left:661px;top:1028px;" width="6" height="10" viewBox="0 0 6 10"><polygon points="0.5,0.5 5.5,5 0.5,9.5" fill="#b0b0b4"/></svg>
<svg style="position:absolute;left:681px;top:1022px;" width="24" height="22" viewBox="0 0 24 22">
<defs><radialGradient id="gg6811022" cx="0.35" cy="0.3" r="0.8"><stop offset="0" stop-color="#e8eef8"/><stop offset="0.45" stop-color="#8a96ad"/><stop offset="1" stop-color="#3c4456"/></radialGradient></defs>
<circle cx="10" cy="10" r="8.5" fill="url(#gg6811022)"/>
<g fill="#f0f0f0"><circle cx="16" cy="14.5" r="4.3"/><circle cx="16.00" cy="10.30" r="1.7"/><circle cx="18.97" cy="11.53" r="1.7"/><circle cx="20.20" cy="14.50" r="1.7"/><circle cx="18.97" cy="17.47" r="1.7"/><circle cx="16.00" cy="18.70" r="1.7"/><circle cx="13.03" cy="17.47" r="1.7"/><circle cx="11.80" cy="14.50" r="1.7"/><circle cx="13.03" cy="11.53" r="1.7"/></g>
<circle cx="16" cy="14.5" r="1.4" fill="#3a3c44"/></svg>
<div style="position:absolute;left:712px;top:1026.66px;font-size:16px;line-height:16px;color:#dcdcdc;letter-spacing:-0.21px;white-space:nowrap;">Video Display</div>
<svg style="position:absolute;left:661px;top:1071px;" width="6" height="10" viewBox="0 0 6 10"><polygon points="0.5,0.5 5.5,5 0.5,9.5" fill="#b0b0b4"/></svg>
<svg style="position:absolute;left:681px;top:1065px;" width="24" height="22" viewBox="0 0 24 22">
<defs><radialGradient id="gg6811065" cx="0.35" cy="0.3" r="0.8"><stop offset="0" stop-color="#e8eef8"/><stop offset="0.45" stop-color="#8a96ad"/><stop offset="1" stop-color="#3c4456"/></radialGradient></defs>
<circle cx="10" cy="10" r="8.5" fill="url(#gg6811065)"/>
<g fill="#f0f0f0"><circle cx="16" cy="14.5" r="4.3"/><circle cx="16.00" cy="10.30" r="1.7"/><circle cx="18.97" cy="11.53" r="1.7"/><circle cx="20.20" cy="14.50" r="1.7"/><circle cx="18.97" cy="17.47" r="1.7"/><circle cx="16.00" cy="18.70" r="1.7"/><circle cx="13.03" cy="17.47" r="1.7"/><circle cx="11.80" cy="14.50" r="1.7"/><circle cx="13.03" cy="11.53" r="1.7"/></g>
<circle cx="16" cy="14.5" r="1.4" fill="#3a3c44"/></svg>
<div style="position:absolute;left:712px;top:1069.31px;font-size:16px;line-height:16px;color:#dcdcdc;letter-spacing:-0.6px;white-space:nowrap;">CCD</div>
<div style="position:absolute;left:990px;top:244px;width:909px;height:40px;background:#d9d8d6;border-radius:5px;"></div>
<div style="position:absolute;left:1000px;top:253.92px;font-size:19px;line-height:19px;color:#8b9dbf;font-weight:bold;letter-spacing:0.38px;white-space:nowrap;">Configuring the Volume Input or Ouput</div>
<div style="position:absolute;left:1002px;top:336.61px;font-size:17px;line-height:17px;color:#e6e6e6;font-weight:bold;letter-spacing:0.75px;white-space:nowrap;">Volume Input</div>
<div style="position:absolute;left:1002px;top:365px;width:885px;height:2px;background:#dadada;"></div>
<div style="position:absolute;right:738px;top:385.61px;font-size:17px;line-height:17px;color:#c8c8c8;letter-spacing:0.5px;white-space:nowrap;margin-right:-0.5px;">Volume:</div>
<div style="position:absolute;left:1222px;top:390.8px;width:189px;height:5px;background:#98999d;border-radius:3px;"></div>
<div style="position:absolute;left:1222px;top:390.8px;width:133px;height:5px;background:#dd3a3c;border-radius:3px 0 0 3px;"></div>
<div style="position:absolute;left:1346px;top:383.8px;width:19px;height:19px;background:#d9d9dd;border-radius:50%;"></div>
<div style="position:absolute;left:1432px;top:385.61px;font-size:17px;line-height:17px;color:#c8c8c8;white-space:nowrap;">7</div>
<div style="position:absolute;left:1002px;top:447.61px;font-size:17px;line-height:17px;color:#e6e6e6;font-weight:bold;letter-spacing:0.75px;white-space:nowrap;">Volume Output</div>
<div style="position:absolute;left:1002px;top:476px;width:885px;height:2px;background:#dadada;"></div>
<div style="position:absolute;right:738px;top:495.11px;font-size:17px;line-height:17px;color:#c8c8c8;letter-spacing:0.5px;white-space:nowrap;margin-right:-0.5px;">Volume:</div>
<div style="position:absolute;left:1222px;top:500.5px;width:189px;height:5px;background:#98999d;border-radius:3px;"></div>
<div style="position:absolute;left:1222px;top:500.5px;width:133px;height:5px;background:#dd3a3c;border-radius:3px 0 0 3px;"></div>
<div style="position:absolute;left:1346px;top:493.5px;width:19px;height:19px;background:#d9d9dd;border-radius:50%;"></div>
<div style="position:absolute;left:1432px;top:495.11px;font-size:17px;line-height:17px;color:#c8c8c8;white-space:nowrap;">7</div>
<div style="position:absolute;left:1002px;top:554.61px;font-size:17px;line-height:17px;color:#e6e6e6;font-weight:bold;letter-spacing:0.75px;white-space:nowrap;">Talk Volume</div>
<div style="position:absolute;left:1002px;top:584px;width:885px;height:2px;background:#dadada;"></div>
<div style="position:absolute;right:738px;top:603.11px;font-size:17px;line-height:17px;color:#c8c8c8;letter-spacing:0.5px;white-space:nowrap;margin-right:-0.5px;">Talk Volume:</div>
<div style="position:absolute;left:1222px;top:608.0px;width:189px;height:5px;background:#98999d;border-radius:3px;"></div>
<div style="position:absolute;left:1222px;top:608.0px;width:133px;height:5px;background:#dd3a3c;border-radius:3px 0 0 3px;"></div>
<div style="position:absolute;left:1346px;top:601.0px;width:19px;height:19px;background:#d9d9dd;border-radius:50%;"></div>
<div style="position:absolute;left:1432px;top:603.11px;font-size:17px;line-height:17px;color:#c8c8c8;white-space:nowrap;">7</div>
<div style="position:absolute;left:1385px;top:645px;width:120px;height:26px;background:transparent;box-sizing:border-box;border:1.5px solid #c4c4c4;border-radius:3px;"></div>
<div style="position:absolute;left:1427px;top:650.96px;font-size:16px;line-height:16px;color:#f4f4f4;font-weight:bold;letter-spacing:-0.3px;white-space:nowrap;">Save</div>
<div style="position:absolute;right:41px;top:1151.61px;font-size:17px;line-height:17px;color:#dedede;white-space:nowrap;">Saved.</div>
<svg style="position:absolute;left:1291px;top:469px;" width="18" height="26" viewBox="0 0 18 26"><path d="M1.7,1.2 L1.7,20.2 L6,16.2 L8.9,23 L11.7,21.8 L9,15.2 L14.7,14.7 Z" fill="#ffffff" stroke="#0a0a0a" stroke-width="1.1" stroke-linejoin="miter"/></svg>
</body></html>
